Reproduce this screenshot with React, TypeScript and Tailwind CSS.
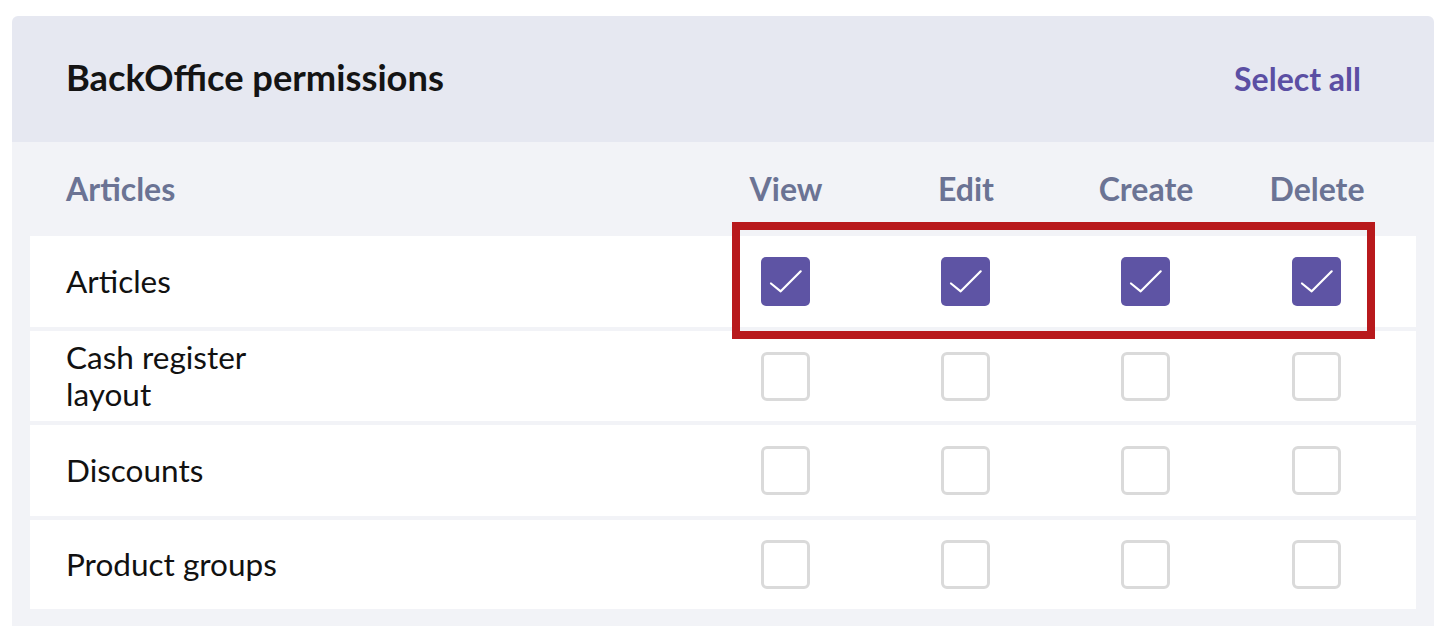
import React from "react";

const rows: { name: string; checked: boolean; h: string }[] = [
  { name: "Articles", checked: true, h: "h-[91px]" },
  { name: "Cash register layout", checked: false, h: "h-[90px]" },
  { name: "Discounts", checked: false, h: "h-[91px]" },
  { name: "Product groups", checked: false, h: "h-[89px]" },
];

function Box({ checked }: { checked: boolean }) {
  if (checked) {
    return (
      <div className="w-[49px] h-[49px] rounded-[5px] bg-[#5e54a4] flex items-center justify-center">
        <svg width="49" height="49" viewBox="0 0 49 49" fill="none">
          <path d="M10 26.5 L19.7 34.3 L39.7 14.3" stroke="#ffffff" strokeWidth="2.2" strokeLinecap="round" strokeLinejoin="round" />
        </svg>
      </div>
    );
  }
  return <div className="w-[49px] h-[49px] rounded-[6px] border-[3px] border-[#dadada] bg-white" />;
}

const rowGrid = "grid grid-cols-[1fr_180px_180px_180px_162px] items-center pl-[36px] pr-[19px]";
const headGrid = "grid grid-cols-[1fr_180px_180px_180px_162px] items-center pl-[36px] pr-[18px]";

export default function App() {
  return (
    <div className="min-h-screen bg-white pt-[16px] pl-[12px]" style={{ fontFamily: "Lato, 'Noto Sans', sans-serif" }}>
      <div className="relative w-[1422px] rounded-t-[6px]">
        <div className="h-[126px] bg-[#e6e8f1] rounded-t-[6px] flex items-center justify-between pl-[54px] pr-[73px]">
          <h1 className="text-[36.3px] font-bold text-[#141414] leading-none -mt-[3px]">BackOffice permissions</h1>
          <button className="text-[32px] font-bold text-[#5b4fa3] leading-none -mt-[1px]">Select all</button>
        </div>
        <div className="bg-[#f2f3f7] px-[18px] pb-[18px]">
          <div className={`${headGrid} h-[94px] text-[32px] font-bold text-[#6b7394]`}>
            <div>Articles</div>
            <div className="text-center">View</div>
            <div className="text-center">Edit</div>
            <div className="text-center">Create</div>
            <div className="text-center">Delete</div>
          </div>
          <div className="flex flex-col gap-[4px]">
            {rows.map((r) => (
              <div key={r.name} className={`${rowGrid} ${r.h} bg-white`}>
                <div className="text-[31.5px] leading-[37px] text-[#111111] max-w-[260px]">{r.name}</div>
                {[0, 1, 2, 3].map((i) => (
                  <div key={i} className="flex justify-center">
                    <Box checked={r.checked} />
                  </div>
                ))}
              </div>
            ))}
          </div>
        </div>
        <div className="absolute left-[720px] top-[206px] w-[643px] h-[117px] border-[8px] border-[#b8191c] pointer-events-none" />
      </div>
    </div>
  );
}
